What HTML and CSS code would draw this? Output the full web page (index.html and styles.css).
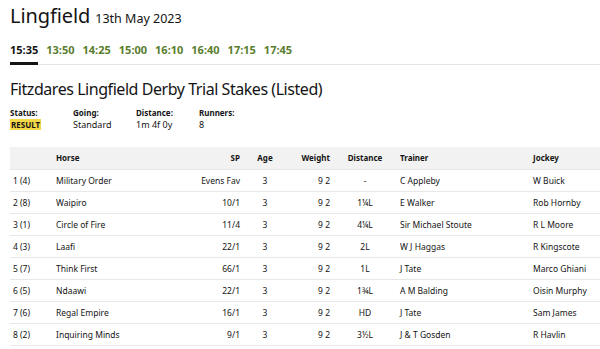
FILE: index.html
```html
<!DOCTYPE html>
<html>
<head>
<meta charset="utf-8">
<link rel="stylesheet" href="styles.css">
</head>
<body>
<div class="page">
  <h1 class="title">Lingfield <span class="date">13th May 2023</span></h1>
  <nav class="tabs">
    <a class="tab active">15:35</a>
    <a class="tab">13:50</a>
    <a class="tab">14:25</a>
    <a class="tab">15:00</a>
    <a class="tab">16:10</a>
    <a class="tab">16:40</a>
    <a class="tab">17:15</a>
    <a class="tab">17:45</a>
  </nav>
  <h2 class="race">Fitzdares Lingfield Derby Trial Stakes (Listed)</h2>
  <div class="meta">
    <div class="meta-item"><div class="label">Status:</div><div class="value"><span class="badge">RESULT</span></div></div>
    <div class="meta-item"><div class="label">Going:</div><div class="value">Standard</div></div>
    <div class="meta-item"><div class="label">Distance:</div><div class="value">1m 4f 0y</div></div>
    <div class="meta-item"><div class="label">Runners:</div><div class="value">8</div></div>
  </div>
  <table class="results">
    <thead>
      <tr><th class="c-pos"></th><th class="c-horse">Horse</th><th class="c-sp">SP</th><th class="c-age">Age</th><th class="c-wt">Weight</th><th class="c-dist">Distance</th><th class="c-tr">Trainer</th><th class="c-jk">Jockey</th></tr>
    </thead>
    <tbody>
      <tr><td class="c-pos">1 (4)</td><td class="c-horse">Military Order</td><td class="c-sp">Evens Fav</td><td class="c-age">3</td><td class="c-wt">9 2</td><td class="c-dist">-</td><td class="c-tr">C Appleby</td><td class="c-jk">W Buick</td></tr>
      <tr><td class="c-pos">2 (8)</td><td class="c-horse">Waipiro</td><td class="c-sp">10/1</td><td class="c-age">3</td><td class="c-wt">9 2</td><td class="c-dist">1¼L</td><td class="c-tr">E Walker</td><td class="c-jk">Rob Hornby</td></tr>
      <tr><td class="c-pos">3 (1)</td><td class="c-horse">Circle of Fire</td><td class="c-sp">11/4</td><td class="c-age">3</td><td class="c-wt">9 2</td><td class="c-dist">4¼L</td><td class="c-tr">Sir Michael Stoute</td><td class="c-jk">R L Moore</td></tr>
      <tr><td class="c-pos">4 (3)</td><td class="c-horse">Laafi</td><td class="c-sp">22/1</td><td class="c-age">3</td><td class="c-wt">9 2</td><td class="c-dist">2L</td><td class="c-tr">W J Haggas</td><td class="c-jk">R Kingscote</td></tr>
      <tr><td class="c-pos">5 (7)</td><td class="c-horse">Think First</td><td class="c-sp">66/1</td><td class="c-age">3</td><td class="c-wt">9 2</td><td class="c-dist">1L</td><td class="c-tr">J Tate</td><td class="c-jk">Marco Ghiani</td></tr>
      <tr><td class="c-pos">6 (5)</td><td class="c-horse">Ndaawi</td><td class="c-sp">22/1</td><td class="c-age">3</td><td class="c-wt">9 2</td><td class="c-dist">1¾L</td><td class="c-tr">A M Balding</td><td class="c-jk">Oisin Murphy</td></tr>
      <tr><td class="c-pos">7 (6)</td><td class="c-horse">Regal Empire</td><td class="c-sp">16/1</td><td class="c-age">3</td><td class="c-wt">9 2</td><td class="c-dist">HD</td><td class="c-tr">J Tate</td><td class="c-jk">Sam James</td></tr>
      <tr><td class="c-pos">8 (2)</td><td class="c-horse">Inquiring Minds</td><td class="c-sp">9/1</td><td class="c-age">3</td><td class="c-wt">9 2</td><td class="c-dist">3½L</td><td class="c-tr">J &amp; T Gosden</td><td class="c-jk">R Havlin</td></tr>
    </tbody>
  </table>
</div>
</body>
</html>
```
FILE: styles.css
```css
* { box-sizing: border-box; }
html, body { margin: 0; padding: 0; background: #fff; }
body {
  font-family: "Noto Sans", "Open Sans", sans-serif;
  color: #141414;
  overflow: hidden;
}
.page { padding-left: 10px; }
.title {
  margin: 0;
  padding-top: 1px;
  font-size: 20px;
  font-weight: 400;
  line-height: 30px;
  letter-spacing: -0.1px;
}
.date { font-size: 12.5px; letter-spacing: 0; }
.tabs {
  display: flex;
  gap: 8px;
  margin-top: 7px;
  border-bottom: 1px solid #e6e6e6;
  margin-right: -10px;
}
.tab {
  font-size: 11px;
  font-weight: 700;
  color: #5a7d2e;
  padding: 2px 0 5px;
  line-height: 14px;
  border-bottom: 3px solid transparent;
  margin-bottom: -1px;
}
.tab.active { color: #141414; border-bottom-color: #141414; }
.race {
  margin: 13px 0 0;
  font-size: 16px;
  letter-spacing: -0.45px;
  font-weight: 400;
  line-height: 22px;
}
.meta {
  display: flex;
  margin-top: 8px;
}
.meta-item { width: 63px; }
.label { font-size: 8px; font-weight: 700; line-height: 10px; }
.value { font-size: 9px; line-height: 12px; margin-top: 1px; }
.badge {
  background: #f5d847;
  font-weight: 700;
  font-size: 8px;
  padding: 0 1px;
}
.results {
  margin-top: 16px;
  width: 590px;
  border-collapse: collapse;
  font-size: 8.5px;
}
.results th, .results td {
  height: 22px;
  padding: 0;
  border-bottom: 1px solid #e8e8e8;
  text-align: left;
  font-weight: 400;
  white-space: nowrap;
}
.results thead tr { background: #f2f2f2; }
.results th { font-weight: 700; font-size: 8px; }
.c-pos { width: 46px; padding-left: 3px !important; }
.c-horse { width: 130px; }
.c-sp { width: 54px; text-align: right !important; }
.c-age { width: 50px; text-align: center !important; }
.c-wt { width: 40px; text-align: right !important; }
.c-dist { width: 70px; text-align: center !important; }
.c-tr { width: 133px; }
.c-jk { }
```
